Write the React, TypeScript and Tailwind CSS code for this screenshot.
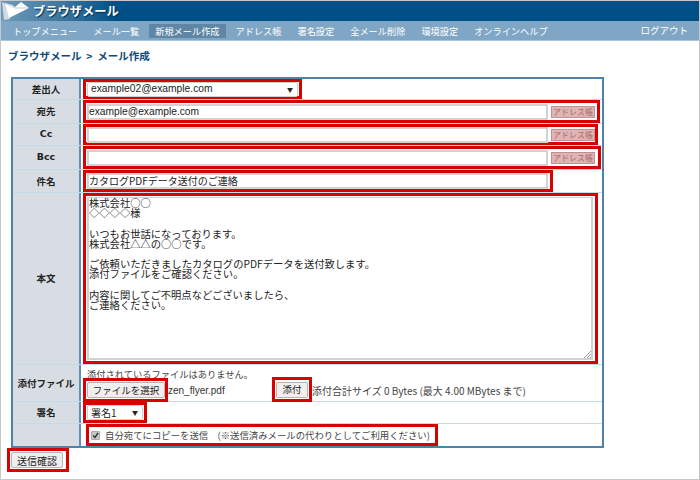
import React from 'react';

const navItems = ['トップメニュー', 'メール一覧', '新規メール作成', 'アドレス帳', '署名設定', '全メール削除', '環境設定', 'オンラインヘルプ'];

const bodyText = `株式会社○○
◇◇◇◇様

いつもお世話になっております。
株式会社△△の○○です。

ご依頼いただきましたカタログのPDFデータを送付致します。
添付ファイルをご確認ください。

内容に関してご不明点などございましたら、
ご連絡ください。`;

const Label = ({ children }: { children?: React.ReactNode }) => (
  <div className="w-[68px] shrink-0 bg-[#d7dde2] border-r-2 border-[#5f8fb5] flex items-center justify-center font-bold text-[9.5px] text-[#222]">
    {children}
  </div>
);

const AddressButton = () => (
  <span className="ml-[3px] shrink-0 w-[44px] h-[12px] bg-[#dfb4b4] border border-[#c29090] text-[#a86a6a] text-[8px] leading-[10px] text-center whitespace-nowrap overflow-hidden">
    アドレス帳
  </span>
);

const AddressRow = ({ label, value, frame, height }: { label: React.ReactNode; value?: string; frame: string; height: string }) => (
  <div className={`flex border-b border-[#c5d9e8] ${height}`}>
    <Label>{label}</Label>
    <div className={`ml-[2px] flex items-center border-[3px] border-[#d90000] pl-[1px] ${frame}`}>
      <div className="w-[461px] h-[16px] shrink-0 border-2 border-[#d2d2d2] bg-white leading-[12px] text-[10.25px] text-[#222] whitespace-nowrap font-['Liberation_Sans',sans-serif]">
        {value}
      </div>
      <AddressButton />
    </div>
  </div>
);

const GrayButton = ({ children, className = '' }: { children: React.ReactNode; className?: string }) => (
  <div className={`h-[16px] flex items-center justify-center bg-[#efefef] border border-[#b5b5b5] rounded-[2px] text-[9.5px] text-[#222] whitespace-nowrap ${className}`}>
    {children}
  </div>
);

export default function App() {
  return (
    <div className="w-[700px] h-[480px] overflow-hidden bg-white border border-[#c8c8c8] text-[10px] text-[#333] font-['Noto_Sans_CJK_JP',sans-serif]">
      <div className="h-[20px] bg-[linear-gradient(90deg,#6f9abb_0,#3f779f_60px,#004f86_115px)] flex items-center">
        <svg width="32" height="20" viewBox="0 0 32 20" className="shrink-0">
          <path d="M1 1 L3 19 L9 18 L5 3 Z" fill="#cfdce6" />
          <path d="M4 2 L11 4 L14 6 L20 1 L28 7 L8 17 Z" fill="#ffffff" />
          <path d="M4 2 L14 7 L28 7" fill="none" stroke="#9db8cc" strokeWidth="0.7" />
        </svg>
        <span className="text-white font-bold text-[12.25px] leading-none [text-shadow:1px_1px_1px_#002f55]">ブラウザメール</span>
      </div>
      <div className="h-[20px] bg-[#7fa6c4] border-b border-[#a9c3d8] flex items-center text-[9.2px] text-white">
        <div className="flex items-center pl-[6px]">
          {navItems.map((item) => (
            <span
              key={item}
              className={`h-[14px] leading-[14px] px-[6px] mr-[4px] whitespace-nowrap ${item === '新規メール作成' ? 'bg-[#5f87a5]' : ''}`}
            >
              {item}
            </span>
          ))}
        </div>
        <span className="ml-auto mr-[11px] text-[9.5px] whitespace-nowrap">ログアウト</span>
      </div>
      <div className="h-[36px] pl-[7px] pt-[7px] text-[#0f4a78] font-bold text-[10.5px] leading-[16px] whitespace-pre">ブラウザメール  &gt;  メール作成</div>

      <div className="ml-[10px] w-[593px] h-[371px] border-2 border-[#4f82aa]">
        <div className="flex h-[21px] border-b border-[#c5d9e8]">
          <Label>差出人</Label>
          <div className="ml-[2px] w-[219px] border-[3px] border-[#d90000] flex items-center pl-[1px]">
            <div className="w-[211px] h-[15px] border border-[#cfcfcf] rounded-[2px] flex items-center justify-between pl-[3px] pr-[4px] text-[#222]">
              <span className="text-[10.25px] font-['Liberation_Sans',sans-serif]">example02@example.com</span>
              <span className="text-[6px]">▼</span>
            </div>
          </div>
        </div>
        <AddressRow label="宛先" value="example@example.com" frame="w-[517px]" height="h-[24px]" />
        <AddressRow label={<span className="font-['DejaVu_Sans',sans-serif]">Cc</span>} frame="w-[515px]" height="h-[22px]" />
        <AddressRow label={<span className="font-['DejaVu_Sans',sans-serif]">Bcc</span>} frame="w-[518px]" height="h-[24px]" />
        <div className="flex h-[23px] border-b border-[#c5d9e8]">
          <Label>件名</Label>
          <div className="ml-[2px] w-[470px] border-[3px] border-[#d90000] flex items-center pl-[1px]">
            <div className="w-[461px] h-[16px] border-2 border-[#d2d2d2] leading-[12px] text-[#222] whitespace-nowrap">カタログPDFデータ送付のご連絡</div>
          </div>
        </div>
        <div className="flex h-[172px] border-b border-[#c5d9e8]">
          <Label>本文</Label>
          <div className="ml-[2px] w-[515px] border-[3px] border-[#d90000] pl-[1px] py-[1px]">
            <div className="relative w-[506px] h-full border-x-2 border-b-2 border-t border-[#d2d2d2] text-[10.3px] leading-[10.2px] text-[#222] whitespace-pre">
              {bodyText}
              <svg width="8" height="8" viewBox="0 0 8 8" className="absolute right-0 bottom-0">
                <path d="M1 8 L8 1 M4 8 L8 4 M7 8 L8 7" stroke="#999" strokeWidth="1" />
              </svg>
            </div>
          </div>
        </div>
        <div className="flex h-[37px] border-b border-[#c5d9e8]">
          <Label>添付ファイル</Label>
          <div className="ml-[2px] flex-1 flex flex-col">
            <div className="pl-[4px] h-[13px] leading-[18px] text-[9.25px] text-[#444] whitespace-nowrap">添付されているファイルはありません。</div>
            <div className="flex items-end h-[24px]">
              <div className="w-[85px] h-[24px] border-[3px] border-[#d90000] flex items-center pl-[1px]">
                <GrayButton className="w-[78px] border-[#7aa3cc]">ファイルを選択</GrayButton>
              </div>
              <span className="w-[104px] self-center font-['Liberation_Sans',sans-serif] text-[#333]">zen_flyer.pdf</span>
              <div className="w-[40px] h-[25px] border-[3px] border-[#d90000] flex items-center pl-[1px]">
                <GrayButton className="w-[32px]">添付</GrayButton>
              </div>
              <span className="self-center whitespace-nowrap text-[#444]">添付合計サイズ 0 Bytes (最大 4.00 MBytes まで)</span>
            </div>
          </div>
        </div>
        <div className="flex h-[22px] border-b border-[#c5d9e8]">
          <Label>署名</Label>
          <div className="ml-[2px] w-[64px] border-[3px] border-[#d90000] flex items-center pl-[1px]">
            <div className="w-[56px] h-[15px] border border-[#cfcfcf] rounded-[2px] flex items-center justify-between pl-[3px] pr-[4px] text-[#222]">
              <span>署名1</span>
              <span className="text-[6px]">▼</span>
            </div>
          </div>
        </div>
        <div className="flex h-[22px]">
          <Label />
          <div className="ml-[5px] w-[352px] border-[3px] border-[#d90000] flex items-center pl-[2px] whitespace-nowrap text-[9.4px] text-[#444]">
            <span className="shrink-0 w-[9px] h-[9px] flex items-center justify-center bg-[#c8c8c8] border border-[#aaa] rounded-[1px]">
              <svg width="7" height="7" viewBox="0 0 7 7">
                <path d="M1 3.5 L3 5.5 L6 1" fill="none" stroke="#333" strokeWidth="1.4" />
              </svg>
            </span>
            <span className="ml-[5px]">自分宛てにコピーを送信　(※送信済みメールの代わりとしてご利用ください)</span>
          </div>
        </div>
      </div>

      <div className="ml-[6px] w-[62px] h-[24px] border-[3px] border-[#d90000] flex items-center pl-[1px]">
        <GrayButton className="w-[52px] text-[10px]">送信確認</GrayButton>
      </div>
    </div>
  );
}
